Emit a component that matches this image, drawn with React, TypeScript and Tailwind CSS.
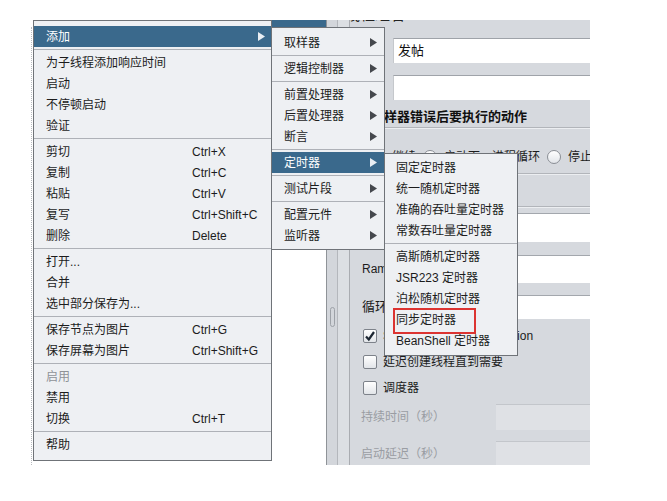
import React from "react";

type Item = { label: string; key?: string; sub?: boolean; active?: boolean; disabled?: boolean } | "sep";

const mainItems: Item[] = [
  { label: "添加", sub: true, active: true },
  "sep",
  { label: "为子线程添加响应时间" },
  { label: "启动" },
  { label: "不停顿启动" },
  { label: "验证" },
  "sep",
  { label: "剪切", key: "Ctrl+X" },
  { label: "复制", key: "Ctrl+C" },
  { label: "粘贴", key: "Ctrl+V" },
  { label: "复写", key: "Ctrl+Shift+C" },
  { label: "删除", key: "Delete" },
  "sep",
  { label: "打开..." },
  { label: "合并" },
  { label: "选中部分保存为..." },
  "sep",
  { label: "保存节点为图片", key: "Ctrl+G" },
  { label: "保存屏幕为图片", key: "Ctrl+Shift+G" },
  "sep",
  { label: "启用", disabled: true },
  { label: "禁用" },
  { label: "切换", key: "Ctrl+T" },
  "sep",
  { label: "帮助" },
];

const addItems: Item[] = [
  { label: "取样器", sub: true },
  "sep",
  { label: "逻辑控制器", sub: true },
  "sep",
  { label: "前置处理器", sub: true },
  { label: "后置处理器", sub: true },
  { label: "断言", sub: true },
  "sep",
  { label: "定时器", sub: true, active: true },
  "sep",
  { label: "测试片段", sub: true },
  "sep",
  { label: "配置元件", sub: true },
  { label: "监听器", sub: true },
];

const timerItems: Item[] = [
  { label: "固定定时器" },
  { label: "统一随机定时器" },
  { label: "准确的吞吐量定时器" },
  { label: "常数吞吐量定时器" },
  "sep",
  { label: "高斯随机定时器" },
  { label: "JSR223 定时器" },
  { label: "泊松随机定时器" },
  { label: "同步定时器" },
  { label: "BeanShell 定时器" },
];

const Arrow = ({ white }: { white?: boolean }) => (
  <svg width="7" height="9" viewBox="0 0 7 9">
    <path d="M0 0L7 4.5L0 9Z" fill={white ? "#e9eef3" : "#45484d"} />
  </svg>
);

const Sep = () => (
  <div className="h-[5px] flex flex-col justify-center">
    <div className="h-px bg-[#aeb1b7]" />
  </div>
);

const MenuRows = ({ items, pl, pr, keyCol }: { items: Item[]; pl: string; pr: string; keyCol?: boolean }) => (
  <>
    {items.map((it, i) =>
      it === "sep" ? (
        <Sep key={i} />
      ) : (
        <div
          key={i}
          className={`h-[21px] flex items-center ${pl} ${pr} ${
            it.active ? "bg-[#3a698c] text-white" : it.disabled ? "text-[#8f9297]" : "text-[#1c1c1c]"
          }`}
        >
          <span className={keyCol ? "w-[146px] shrink-0" : ""}>{it.label}</span>
          {it.key && <span>{it.key}</span>}
          {it.sub && (
            <span className="ml-auto flex">
              <Arrow white={it.active} />
            </span>
          )}
        </div>
      )
    )}
  </>
);

const Check = ({ on }: { on?: boolean }) => (
  <div className="w-[14px] h-[14px] rounded-[2px] border border-[#7d828a] bg-gradient-to-b from-white to-[#e2e5e9] flex items-center justify-center shrink-0">
    {on && (
      <svg width="12" height="12" viewBox="0 0 12 12">
        <path d="M2 6.5L4.8 9.5L10 2" stroke="#1d2733" strokeWidth="2.2" fill="none" />
      </svg>
    )}
  </div>
);

const Radio = () => (
  <div className="w-[14px] h-[14px] rounded-full border border-[#8a8e95] bg-gradient-to-b from-white to-[#e2e5e9] shrink-0" />
);

const Line = () => <div className="h-[2px] border-t border-[#b2b5ba] border-b border-b-[#eceef1]" />;

export default function App() {
  return (
    <div className="relative w-[667px] h-[501px] bg-white overflow-hidden text-[12px] font-['Liberation_Sans','Noto_Sans_CJK_SC',sans-serif]">
      {/* background window */}
      <div className="flex pt-[20px] h-[465px]">
        <div className="w-[326px] h-full flex flex-col">
          <div className="h-[7px] ml-[40px] bg-[#3a698c]" />
          <div className="flex-1 ml-[31px] border-l border-dotted border-[#b9bcc0]" />
        </div>
        <div className="w-[11px] h-full border-l border-[#8f9398] bg-[#d3d6db] pt-[287px]">
          <div className="ml-[3px] w-[5px] h-[20px] rounded-full border border-[#9da1a7]" />
        </div>
        <div className="w-[13px] h-full border-l border-[#b4b7bc] border-r border-r-[#a9acb1] bg-[#dcdfe3]" />
        <div className="w-[240px] h-full bg-[#d6d9de] flex flex-col overflow-hidden">
          <div className="h-[18px] overflow-hidden">
            <div className="-mt-[16px] -ml-[5px] text-[15px] text-[#222]">线程组名</div>
          </div>
          <div className="ml-[43px] h-[25px] bg-white border-t border-[#9fa3a9] border-l border-l-[#c5c8cc] pl-[4px] text-[13px] leading-[24px] text-[#111]">
            发帖
          </div>
          <div className="mt-[12px] ml-[43px] h-[25px] bg-white border-t border-[#9fa3a9] border-l border-l-[#c5c8cc]" />
          <div className="h-[20px] mt-[7px] ml-[8px] font-bold text-[13px] leading-[20px] text-[#111] whitespace-nowrap">
            在取样器错误后要执行的动作
          </div>
          <Line />
          <div className="mt-[20px] h-[16px] flex items-center whitespace-nowrap text-[#1c1c1c]">
            <div className="ml-[22px]">
              <Radio />
            </div>
            <span className="ml-[6px]">继续</span>
            <div className="ml-[7px]">
              <Radio />
            </div>
            <span className="ml-[7px]">启动下一进程循环</span>
            <div className="ml-[7px]">
              <Radio />
            </div>
            <span className="ml-[7px]">停止线程</span>
          </div>
          <div className="mt-[8px]">
            <Line />
          </div>
          <div className="h-[31px] pl-[12px] leading-[31px] text-[#1c1c1c]">线程属性</div>
          <Line />
          <div className="mt-[5px] h-[30px] flex items-center">
            <span className="ml-[12px] w-[134px] text-[#1c1c1c]">线程数：</span>
            <div className="flex-1 h-full bg-white border-t border-[#a3a7ad]" />
          </div>
          <div className="mt-[13px] h-[28px] flex items-center">
            <span className="ml-[12px] w-[134px] text-[#1c1c1c] whitespace-nowrap">Ramp-up时间（秒）：</span>
            <div className="flex-1 h-full bg-white border-t border-[#a3a7ad]" />
          </div>
          <div className="mt-[12px] h-[24px] flex items-center">
            <span className="ml-[12px] w-[134px] text-[#1c1c1c] text-[13px]">循环次数</span>
            <div className="flex-1 h-full bg-white border-t border-[#a3a7ad]" />
          </div>
          <div className="mt-[10px] ml-[13px] h-[14px] flex items-center gap-[6px] text-[#1c1c1c] whitespace-nowrap">
            <Check on />
            <span>Same user on each iteration</span>
          </div>
          <div className="mt-[12px] ml-[13px] h-[14px] flex items-center gap-[6px] text-[#1c1c1c]">
            <Check />
            <span>延迟创建线程直到需要</span>
          </div>
          <div className="mt-[12px] ml-[13px] h-[14px] flex items-center gap-[6px] text-[#1c1c1c]">
            <Check />
            <span>调度器</span>
          </div>
          <div className="mt-[9px] h-[27px] flex items-center">
            <span className="ml-[11px] w-[135px] text-[#9a9da3]">持续时间（秒）</span>
            <div className="flex-1 h-full bg-[#dfe1e5] border-t border-[#c3c6cb]" />
          </div>
          <div className="mt-[11px] h-[24px] flex items-center">
            <span className="ml-[11px] w-[135px] text-[#9a9da3] pt-[2px]">启动延迟（秒）</span>
            <div className="flex-1 h-full bg-[#dfe1e5] border-t border-[#c3c6cb]" />
          </div>
        </div>
      </div>

      {/* context menu */}
      <div className="absolute left-[33px] top-[20px] w-[239px] bg-[#eef0f3] border border-[#6f7378] py-[5px]">
        <MenuRows items={mainItems} pl="pl-[12px]" pr="pr-[6px]" keyCol />
      </div>

      {/* 添加 submenu */}
      <div className="absolute left-[271px] top-[27px] w-[114px] bg-[#eef0f3] border border-[#6f7378] pt-[4px] pb-[3px]">
        <MenuRows items={addItems} pl="pl-[12px]" pr="pr-[7px]" />
      </div>

      {/* 定时器 submenu */}
      <div className="absolute left-[384px] top-[153px] w-[134px] bg-[#eef0f3] border border-[#6f7378] pt-[3px] pb-[4px]">
        <MenuRows items={timerItems} pl="pl-[11px]" pr="pr-[6px]" />
        <div className="absolute left-[8px] top-[154px] w-[83px] h-[26px] border-2 border-[#dc3431]" />
      </div>
    </div>
  );
}
